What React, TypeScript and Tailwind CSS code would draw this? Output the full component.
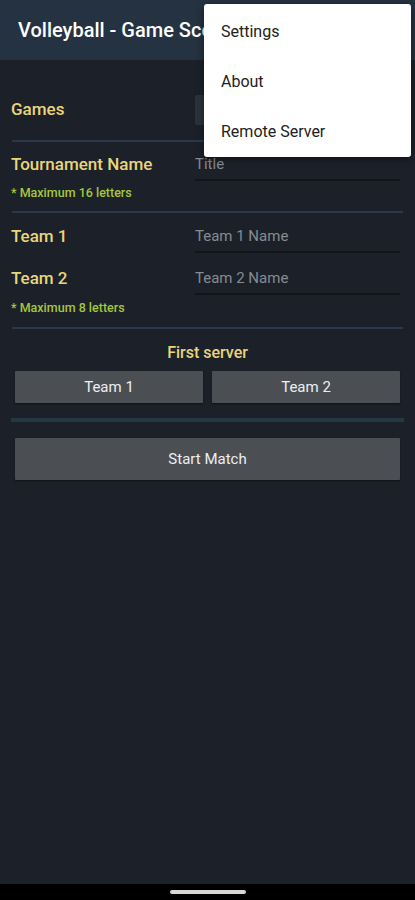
import { useState } from 'react';

const font = { fontFamily: 'Roboto, "Noto Sans", sans-serif' };

function Row({ label, placeholder }: { label: string; placeholder: string }) {
  return (
    <div className="flex items-center h-[42px]">
      <div className="w-[184px] text-[17px] font-medium text-[#e9d57c]">{label}</div>
      <div className="flex-1 mr-[4px] h-[32px] flex items-center border-b-2 border-[#111419] text-[15px] text-[#878b92]">
        {placeholder}
      </div>
    </div>
  );
}

export default function App() {
  const [server, setServer] = useState<1 | 2 | null>(null);

  return (
    <div className="relative w-[415px] h-[900px] bg-[#1c2129] flex flex-col overflow-hidden" style={font}>
      <div className="h-[60px] bg-[#253241] flex items-center px-[18px] shrink-0">
        {/* the overflow menu covers the rest of the title */}
        <h1 className="w-[186px] overflow-hidden text-[20px] font-medium text-white whitespace-nowrap">Volleyball - Game Score Board</h1>
      </div>

      <div className="flex-1 flex flex-col px-[11px]">
        <div className="flex items-center h-[80px] pt-[20px]">
          <div className="w-[184px] text-[17px] font-medium text-[#e9d57c]">Games</div>
          <div className="w-[9px] h-[30px] bg-[#2c323b] rounded-l-[2px]" />
        </div>
        <div className="h-[2px] bg-[#28394a] mx-[1px]" />

        <div className="pt-[2px]">
          <Row label="Tournament Name" placeholder="Title" />
          <div className="text-[12.5px] font-medium text-[#a5c83c] -mt-[2px] h-[18px]">* Maximum 16 letters</div>
        </div>
        <div className="h-[2px] bg-[#28394a] mx-[1px] mt-[9px]" />

        <div className="pt-[3px]">
          <Row label="Team 1" placeholder="Team 1 Name" />
          <Row label="Team 2" placeholder="Team 2 Name" />
          <div className="text-[12.5px] font-medium text-[#a5c83c] -mt-[1px] h-[18px]">* Maximum 8 letters</div>
        </div>
        <div className="h-[2px] bg-[#28394a] mx-[1px] mt-[10px]" />

        <div className="text-center text-[16px] font-medium text-[#e9d57c] mt-[12px]">First server</div>
        <div className="flex gap-[9px] px-[4px] mt-[6px]">
          <button
            onClick={() => setServer(1)}
            className={`flex-1 h-[32px] text-[15px] text-[#eceff1] rounded-[1px] shadow-[0_1px_2px_rgba(0,0,0,0.5)] ${server === 1 ? 'bg-[#5c6168]' : 'bg-[#4b4e53]'}`}
          >
            Team 1
          </button>
          <button
            onClick={() => setServer(2)}
            className={`flex-1 h-[32px] text-[15px] text-[#eceff1] rounded-[1px] shadow-[0_1px_2px_rgba(0,0,0,0.5)] ${server === 2 ? 'bg-[#5c6168]' : 'bg-[#4b4e53]'}`}
          >
            Team 2
          </button>
        </div>
        <div className="h-[4px] bg-[#243747] mt-[15px]" />

        <div className="px-[4px] mt-[16px]">
          <button className="w-full h-[42px] bg-[#4b4e53] text-[15px] text-[#eceff1] rounded-[1px] shadow-[0_1px_2px_rgba(0,0,0,0.5)]">
            Start Match
          </button>
        </div>
      </div>

      <div className="h-[16px] bg-black flex items-start justify-center shrink-0">
        <div className="w-[76px] h-[4px] rounded-full bg-[#d8d8d8] mt-[6px]" />
      </div>

      <div className="absolute left-[204px] top-[4px] w-[207px] bg-white rounded-[3px] shadow-[0_2px_8px_rgba(0,0,0,0.45)] pt-[3px]">
        {['Settings', 'About', 'Remote Server'].map((item) => (
          <div key={item} className="h-[50px] flex items-center px-[17px] text-[16px] text-[#212121]">
            {item}
          </div>
        ))}
      </div>
    </div>
  );
}
